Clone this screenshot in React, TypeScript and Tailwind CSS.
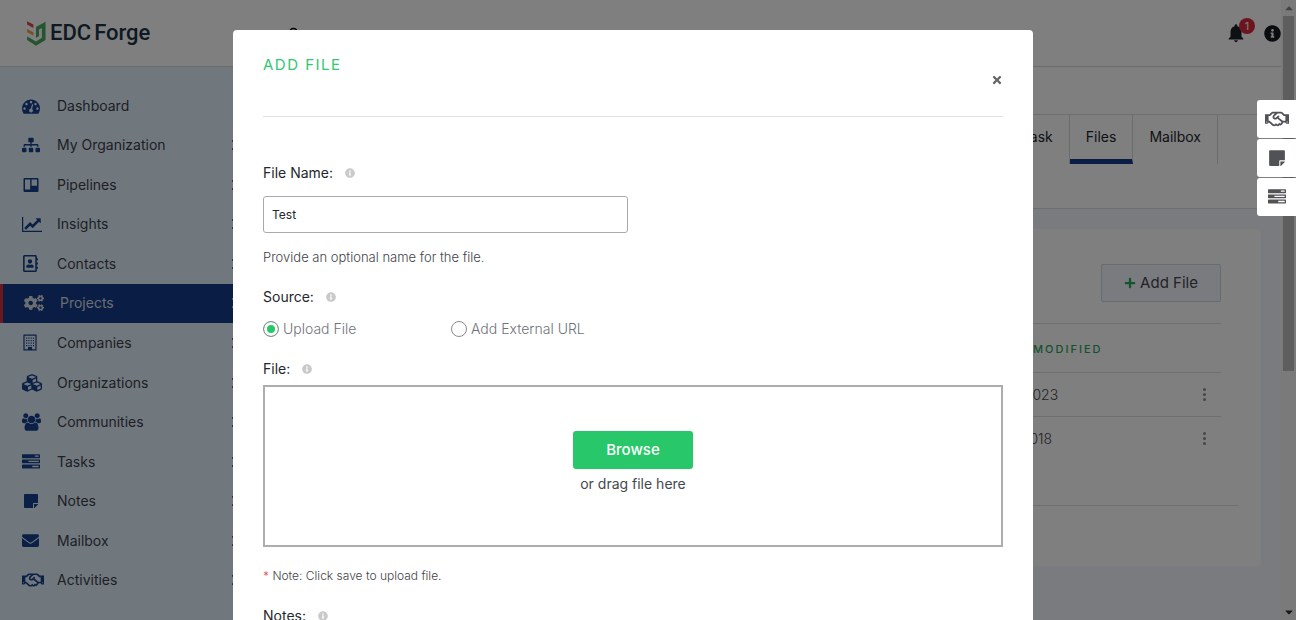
import React from "react";
import type { ReactNode } from "react";
import {
  FaSitemap,
  FaRegAddressBook,
  FaCogs,
  FaCubes,
  FaStickyNote,
  FaEnvelope,
  FaRegHandshake,
  FaInfoCircle,
  FaPlus,
  FaTimes,
  FaChevronRight,
  FaCaretUp,
  FaCaretDown,
} from "react-icons/fa";
import { MdNotifications } from "react-icons/md";
import { Search } from "lucide-react";

function DashboardIcon() {
  return (
    <svg viewBox="0 0 1792 1792" className="size-[18px]" fill="currentColor" aria-hidden="true">
      <path d="M384 1152q0-53-37.5-90.5t-90.5-37.5-90.5 37.5-37.5 90.5 37.5 90.5 90.5 37.5 90.5-37.5 37.5-90.5zm192-448q0-53-37.5-90.5t-90.5-37.5-90.5 37.5-37.5 90.5 37.5 90.5 90.5 37.5 90.5-37.5 37.5-90.5zm428 481l101-382q6-26-7.5-48.5t-38.5-29.5-48 6.5-30 39.5l-101 382q-60 5-107 43.5t-63 98.5q-20 77 20 146t117 89 146-20 89-117q16-60-6-117t-72-91zm660-33q0-53-37.5-90.5t-90.5-37.5-90.5 37.5-37.5 90.5 37.5 90.5 90.5 37.5 90.5-37.5 37.5-90.5zm-640-640q0-53-37.5-90.5t-90.5-37.5-90.5 37.5-37.5 90.5 37.5 90.5 90.5 37.5 90.5-37.5 37.5-90.5zm448 192q0-53-37.5-90.5t-90.5-37.5-90.5 37.5-37.5 90.5 37.5 90.5 90.5 37.5 90.5-37.5 37.5-90.5zm320 448q0 261-141 483-19 29-54 29h-1402q-35 0-54-29-141-221-141-483 0-182 71-348t191-286 286-191 348-71 348 71 286 191 191 286 71 348z" />
    </svg>
  );
}

function BoardIcon() {
  return (
    <svg viewBox="0 0 16 16" className="ml-px size-4" fill="currentColor" fillRule="evenodd" aria-hidden="true">
      <path d="M1.5 1h13q1 0 1 1v12q0 1-1 1h-13q-1 0-1-1V2q0-1 1-1zM2 2.5v10h5.2v-10zM8.6 2.5v6.3H14V2.5z" />
    </svg>
  );
}

function LineChartIcon() {
  return (
    <svg viewBox="0 128 2048 1536" className="h-[15px] w-5" fill="currentColor" aria-hidden="true">
      <path d="M2048 1536v128H0V128h128v1408h1920zM1920 288v435q0 21-19.5 29.5T1865 745l-121-121-633 633q-10 10-23 10t-23-10l-233-233-416 416-192-192 585-585q10-10 23-10t23 10l233 233 464-464-121-121q-16-16-7.5-35.5T1453 256h435q14 0 23 9t9 23z" />
    </svg>
  );
}

const windowColumns = [4, 6.3, 8.6, 10.9];
const windowRows = [3.5, 6, 8.5, 11];

function BuildingIcon() {
  return (
    <svg viewBox="0 0 16 17" className="h-[17px] w-4" fill="currentColor" aria-hidden="true">
      <path fillRule="evenodd" d="M2 .5h12q.6 0 .6.6v15.4H1.400V1.100q0-.6.6-.6zM2.600 1.700v13.600H6v-2.300h4v2.300h3.400V1.700z" />
      {windowRows.map((y) =>
        windowColumns.map((x) => <rect key={`${x}-${y}`} x={x} y={y} width="1.2" height="1.2" />)
      )}
    </svg>
  );
}

function CommunityIcon() {
  return (
    <svg viewBox="-64 0 1920 1792" className="h-[18px] w-[19px]" fill="currentColor" aria-hidden="true">
      <path d="M529 896q-162 5-265 128h-134q-82 0-138-40.5t-56-118.5q0-353 124-353 6 0 43.5 21t97.5 42.5 119 21.5q67 0 133-23-5 37-5 66 0 139 81 256zm1071 637q0 120-73 189.5t-194 69.5h-874q-121 0-194-69.5t-73-189.5q0-53 3.5-103.5t14-109 26.5-108.5 43-97.5 62-81 85.5-53.5 111.5-20q10 0 43 21.5t73 48 107 48 135 21.5 135-21.5 107-48 73-48 43-21.5q61 0 111.5 20t85.5 53.5 62 81 43 97.5 26.5 108.5 14 109 3.5 103.5zm-1024-1277q0 106-75 181t-181 75-181-75-75-181 75-181 181-75 181 75 75 181zm704 384q0 159-112.5 271.5t-271.5 112.5-271.5-112.5-112.5-271.5 112.5-271.5 271.5-112.5 271.5 112.5 112.5 271.5zm576 225q0 78-56 118.5t-138 40.5h-134q-103-123-265-128 81-117 81-256 0-29-5-66 66 23 133 23 59 0 119-21.5t97.5-42.5 43.5-21q124 0 124 353zm-128-609q0 106-75 181t-181 75-181-75-75-181 75-181 181-75 181 75 75 181z" />
    </svg>
  );
}

function TasksIcon() {
  return (
    <svg viewBox="0 0 1792 1792" className="size-[18px]" fill="currentColor" aria-hidden="true">
      <path d="M1024 1408h640v-128h-640v128zm-384-512h1024v-128h-1024v128zm640-512h384v-128h-384v128zm512 832v256q0 26-19 45t-45 19h-1664q-26 0-45-19t-19-45v-256q0-26 19-45t45-19h1664q26 0 45 19t19 45zm0-512v256q0 26-19 45t-45 19h-1664q-26 0-45-19t-19-45v-256q0-26 19-45t45-19h1664q26 0 45 19t19 45zm0-512v256q0 26-19 45t-45 19h-1664q-26 0-45-19t-19-45v-256q0-26 19-45t45-19h1664q26 0 45 19t19 45z" />
    </svg>
  );
}

function Logo() {
  return (
    <a href="#" className="flex w-[122px] items-center gap-1" aria-label="EDC Forge">
      <svg viewBox="0 0 60 76" className="h-[25px] w-5 shrink-0" aria-hidden="true">
        <path d="M3 1l19 10v10L3 11z" fill="#d8474c" />
        <path d="M3 24l19 10v10L3 34z" fill="#eda044" />
        <path d="M30 18L59 2v56L30 75 3 58V47l27 15 18-11V21l-9 5v20l-9 5z" fill="#4aa862" />
      </svg>
      <span className="flex gap-[3px] font-[Roboto,sans-serif] text-[22px] leading-7 font-medium text-[#1c3446]">
        <span>EDC</span>
        <span>Forge</span>
      </span>
    </a>
  );
}

type NavItem = { label: string; icon: ReactNode; active?: boolean; leaf?: boolean };

const navItems: NavItem[] = [
  { label: "Dashboard", icon: <DashboardIcon />, leaf: true },
  { label: "My Organization", icon: <FaSitemap className="h-4 w-[18px]" /> },
  { label: "Pipelines", icon: <BoardIcon /> },
  { label: "Insights", icon: <LineChartIcon /> },
  { label: "Contacts", icon: <FaRegAddressBook className="size-[17px]" /> },
  { label: "Projects", icon: <FaCogs className="size-5" />, active: true },
  { label: "Companies", icon: <BuildingIcon /> },
  { label: "Organizations", icon: <FaCubes className="size-5" /> },
  { label: "Communities", icon: <CommunityIcon /> },
  { label: "Tasks", icon: <TasksIcon /> },
  { label: "Notes", icon: <FaStickyNote className="ml-px size-4" /> },
  { label: "Mailbox", icon: <FaEnvelope className="size-[17px]" /> },
  { label: "Activities", icon: <FaRegHandshake className="h-[18px] w-[22px]" /> },
];

function Sidebar() {
  return (
    <nav className="w-[250px] shrink-0 bg-[#e2f0fb] pt-[19px]">
      <ul className="grid h-[514px] auto-rows-fr">
        {navItems.map((item) => (
          <li key={item.label} className="flex">
            <a
              href="#"
              className={
                item.active
                  ? "flex flex-1 items-center border-l-3 border-[#d8303c] bg-[#143a88] pr-[9px] pl-[21px] text-sm text-[#d5dae4]"
                  : "flex flex-1 items-center pr-[9px] pl-[22px] text-sm text-[#3c3f4c]"
              }
            >
              <span className={item.active ? "flex w-9" : "flex w-[35px] text-[#17408c]"}>{item.icon}</span>
              <span className="flex-1">{item.label}</span>
              {!item.leaf && <FaChevronRight className="size-3" />}
            </a>
          </li>
        ))}
      </ul>
    </nav>
  );
}

function Header() {
  return (
    <header className="flex h-[67px] shrink-0 items-center border-b border-[#d3d9df] bg-white pl-[26px]">
      <Logo />
      <Search className="ml-[140px] size-3 text-black" strokeWidth={3} />
      <div className="ml-auto flex items-center gap-[17px]">
        <button type="button" aria-label="Notifications" className="relative text-[#1c2328]">
          <MdNotifications className="size-[22px]" />
          <span className="absolute -top-1 -right-2 flex size-4 items-center justify-center rounded-full bg-[#d92a3c] text-[11px] leading-none text-white">
            1
          </span>
        </button>
        <button type="button" aria-label="Information" className="text-[#14181f]">
          <FaInfoCircle className="size-[17px]" />
        </button>
      </div>
    </header>
  );
}

const tabs = ["Task", "Files", "Mailbox"];
const rows = ["05/12/2023", "11/06/2018"];

function Content() {
  return (
    <main className="flex min-w-0 flex-1 flex-col bg-[#f5f6fc]">
      <div className="h-[142px] shrink-0 border-b border-[#d9dce3] bg-white pt-[47px]">
        <div className="flex justify-end border-t border-[#dcdfe3] pr-[63px] text-sm text-[#22252b]">
          {tabs.map((tab) => (
            <a
              key={tab}
              href="#"
              className={
                tab === "Files"
                  ? "h-[49px] border-r border-b-5 border-r-[#d5d8dc] border-b-[#143a88] px-4 pt-3"
                  : "h-[49px] border-r border-[#d5d8dc] px-4 pt-3"
              }
            >
              {tab}
            </a>
          ))}
        </div>
      </div>
      <section className="mx-5 mt-5 h-[337px] rounded-sm bg-white pt-[35px] pl-10">
        <div className="flex justify-end pr-10">
          <button
            type="button"
            className="flex h-[38px] w-[120px] items-center justify-center gap-1 rounded-xs border border-[#cfd8df] bg-[#f4f7fc] text-[15px] text-[#44474d]"
          >
            <FaPlus className="size-3 text-[#28a95c]" />
            Add File
          </button>
        </div>
        <div className="mt-[21px] mr-[23px] border-b border-[#dcdfe2] pb-11">
          <div className="pr-[17px]">
            <table className="w-full table-fixed border-collapse text-sm font-light text-[#44474d]">
              <thead>
                <tr className="h-[49px] border-y border-[#dcdfe2] text-[11px] tracking-[2px] text-[#2ca35c]">
                  <th className="pt-1 text-left font-medium">NAME</th>
                  <th className="w-[206px] pt-1 pl-[50px] text-left font-medium">MODIFIED</th>
                  <th className="w-8" aria-label="Actions" />
                </tr>
              </thead>
              <tbody>
                {rows.map((date) => (
                  <tr key={date} className="h-11 border-b border-[#dcdfe2] last:border-b-0">
                    <td />
                    <td>{date}</td>
                    <td>
                      <button type="button" aria-label="Row actions" className="ml-[14px] flex flex-col gap-0.5">
                        <span className="size-[3px] rounded-full bg-[#8a8d92]" />
                        <span className="size-[3px] rounded-full bg-[#8a8d92]" />
                        <span className="size-[3px] rounded-full bg-[#8a8d92]" />
                      </button>
                    </td>
                  </tr>
                ))}
              </tbody>
            </table>
          </div>
        </div>
      </section>
    </main>
  );
}

function ScrollTrack() {
  return (
    <div className="flex w-[15px] shrink-0 flex-col items-center justify-between bg-[#f4f4f5]" aria-hidden="true">
      <FaCaretUp className="my-0.5 size-3 text-[#888]" />
      <div className="mb-auto h-[355px] w-[11px] bg-[#bcbcbd]" />
      <FaCaretDown className="my-0.5 size-3 text-[#333]" />
    </div>
  );
}

function FieldLabel({ text, htmlFor }: { text: string; htmlFor?: string }) {
  return (
    <div className="flex h-5 items-center gap-3 text-sm text-[#24272c]">
      <label htmlFor={htmlFor}>{text}</label>
      <FaInfoCircle className="size-2.5 text-[#cacaca]" />
    </div>
  );
}

const radioClass =
  "size-4 appearance-none rounded-full border border-[#8c8c8c] bg-white checked:bg-[#28c76a] checked:shadow-[inset_0_0_0_3px_white]";

function AddFileDialog() {
  return (
    <div role="dialog" aria-labelledby="dialog-title" className="w-[800px] rounded-t-sm bg-white px-[30px] pt-[25px] pb-10">
      <div className="flex h-[62px] items-start justify-between border-b border-[#dfe2e4]">
        <h2 id="dialog-title" className="text-[15px] leading-5 tracking-widest text-[#35c573]">
          ADD FILE
        </h2>
        <button type="button" aria-label="Close" className="mt-[19px] text-[#666]">
          <FaTimes className="size-3" />
        </button>
      </div>
      <form className="pt-[46px]">
        <FieldLabel text="File Name:" htmlFor="file-name" />
        <input
          id="file-name"
          type="text"
          defaultValue="Test"
          className="mt-[13px] block h-[37px] w-[365px] rounded-[3px] border border-[#aaa] px-2 text-xs text-[#24272c]"
        />
        <p className="mt-[14px] text-[13px] leading-5 font-light text-[#3f4247]">Provide an optional name for the file.</p>
        <div className="mt-5">
          <FieldLabel text="Source:" />
        </div>
        <div className="mt-3 flex text-sm leading-5 font-light text-[#6f7277]">
          <label className="flex w-[188px] items-center gap-1">
            <input type="radio" name="source" defaultChecked className={radioClass} />
            Upload File
          </label>
          <label className="flex items-center gap-1">
            <input type="radio" name="source" className={radioClass} />
            Add External URL
          </label>
        </div>
        <div className="mt-5">
          <FieldLabel text="File:" />
        </div>
        <div className="mt-1.5 flex h-[162px] flex-col items-center border-2 border-[#adadad] pt-11">
          <button type="button" className="h-[38px] w-[120px] rounded-[3px] bg-[#28c76a] text-[15px] font-medium text-white">
            Browse
          </button>
          <p className="mt-[5px] text-sm leading-5 text-[#44474d]">or drag file here</p>
        </div>
        <p className="mt-[19px] text-xs leading-5 font-light text-[#3f4247]">
          <span className="text-[#e0474c]">*</span> Note: Click save to upload file.
        </p>
        <div className="mt-5">
          <FieldLabel text="Notes:" htmlFor="notes" />
        </div>
        <textarea id="notes" className="mt-3 block h-24 w-full rounded-[3px] border border-[#aaa] p-2 text-sm" />
      </form>
    </div>
  );
}

const quickActions = [
  { label: "Activities", icon: <FaRegHandshake className="h-5 w-6" /> },
  { label: "Notes", icon: <FaStickyNote className="size-[18px]" /> },
  { label: "Tasks", icon: <TasksIcon /> },
];

export default function App() {
  return (
    <div className="relative h-screen overflow-hidden font-[Inter,sans-serif]">
      <div className="flex h-full">
        <div className="flex min-w-0 flex-1 flex-col">
          <Header />
          <div className="flex min-h-0 flex-1">
            <Sidebar />
            <Content />
          </div>
        </div>
        <ScrollTrack />
      </div>
      <div className="absolute inset-0 flex items-start justify-center overflow-hidden bg-black/50 pt-[30px] pr-[30px]">
        <AddFileDialog />
      </div>
      <div className="absolute top-[100px] right-0 flex flex-col gap-px">
        {quickActions.map((action) => (
          <button
            key={action.label}
            type="button"
            aria-label={action.label}
            className="flex h-[38px] w-[39px] items-center justify-center rounded-l-[3px] bg-white text-[#505256]"
          >
            {action.icon}
          </button>
        ))}
      </div>
    </div>
  );
}
